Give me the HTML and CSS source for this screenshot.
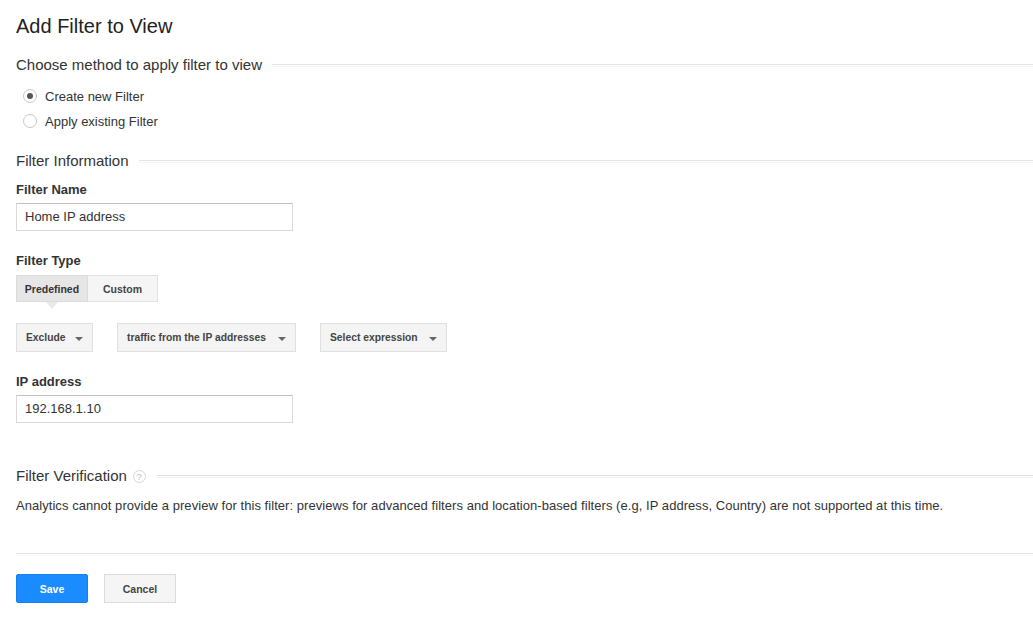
FILE: index.html
```html
<!DOCTYPE html>
<html>
<head>
<meta charset="utf-8">
<link rel="stylesheet" href="styles.css">
</head>
<body>
<div class="page">
  <h1 class="title">Add Filter to View</h1>

  <div class="section-head"><span class="section-title">Choose method to apply filter to view</span><span class="rule"></span></div>
  <div class="radios">
    <label class="radio"><span class="dot checked"></span>Create new Filter</label>
    <label class="radio"><span class="dot"></span>Apply existing Filter</label>
  </div>

  <div class="section-head info"><span class="section-title">Filter Information</span><span class="rule"></span></div>
  <div class="field-label name-label">Filter Name</div>
  <div class="input">Home IP address</div>

  <div class="field-label type-label">Filter Type</div>
  <div class="tabs">
    <span class="tab active">Predefined</span>
    <span class="tab">Custom</span>
  </div>

  <div class="selects">
    <span class="select s1">Exclude<span class="caret"></span></span>
    <span class="select s2">traffic from the IP addresses<span class="caret"></span></span>
    <span class="select s3">Select expression<span class="caret"></span></span>
  </div>

  <div class="field-label ip-label">IP address</div>
  <div class="input">192.168.1.10</div>

  <div class="section-head verif"><span class="section-title">Filter Verification</span><span class="help">?</span><span class="rule"></span></div>
  <p class="note">Analytics cannot provide a preview for this filter: previews for advanced filters and location-based filters (e.g, IP address, Country) are not supported at this time.</p>

  <div class="divider"></div>
  <div class="actions">
    <span class="btn save">Save</span>
    <span class="btn cancel">Cancel</span>
  </div>
</div>
</body>
</html>
```

FILE: styles.css
```css
html, body {
  margin: 0;
  padding: 0;
  background: #fff;
}
body {
  font-family: "Liberation Sans", Arial, sans-serif;
  color: #333;
  font-size: 13px;
}
.page {
  padding: 14px 0 0 16px;
}
.title {
  margin: 0;
  font-weight: normal;
  font-size: 20px;
  line-height: 24px;
  color: #222;
}
.section-head {
  display: flex;
  align-items: center;
  margin-top: 16px;
  height: 20px;
}
.section-title {
  font-size: 15px;
  color: #333;
  white-space: nowrap;
}
.rule {
  flex: 1;
  height: 1px;
  margin-left: 10px;
  margin-top: 3px;
  border-top: 1px solid #e2e2e2;
  border-bottom: 1px solid #f4f4f4;
}
.radios {
  margin-top: 14px;
  display: flex;
  flex-direction: column;
  gap: 9px;
}
.radio {
  display: flex;
  align-items: center;
  height: 16px;
  padding-left: 7px;
  color: #333;
}
.dot {
  width: 14px;
  height: 14px;
  border: 1px solid #c8c8c8;
  border-radius: 50%;
  margin-right: 8px;
  box-sizing: border-box;
  display: inline-flex;
  align-items: center;
  justify-content: center;
  background: #fff;
}
.dot.checked::after {
  content: "";
  width: 6px;
  height: 6px;
  border-radius: 50%;
  background: #555;
}
.section-head.info {
  margin-top: 21px;
}
.field-label {
  font-weight: bold;
  font-size: 13px;
  color: #333;
  line-height: 16px;
}
.name-label {
  margin-top: 12px;
}
.input {
  margin-top: 5px;
  width: 277px;
  height: 28px;
  box-sizing: border-box;
  border: 1px solid #d9d9d9;
  border-top-color: #c0c0c0;
  padding-left: 8px;
  line-height: 26px;
  font-size: 13px;
  color: #333;
}
.type-label {
  margin-top: 22px;
}
.tabs {
  margin-top: 6px;
  display: flex;
  width: 142px;
  height: 27px;
}
.tab {
  display: flex;
  align-items: center;
  justify-content: center;
  font-weight: bold;
  font-size: 10.5px;
  color: #444;
  background: #f5f5f5;
  border: 1px solid #e2e2e2;
  box-sizing: border-box;
  width: 70px;
}
.tab.active {
  width: 72px;
  background: #e6e6e6;
  border-color: #dcdcdc;
  color: #333;
  position: relative;
}
.tab.active::after {
  content: "";
  position: absolute;
  left: 29px;
  bottom: -8px;
  border-left: 6px solid transparent;
  border-right: 6px solid transparent;
  border-top: 7px solid #e9e9e9;
}
.tab + .tab {
  border-left: none;
}
.selects {
  margin-top: 21px;
  display: flex;
  gap: 24px;
}
.select {
  display: flex;
  align-items: center;
  height: 29px;
  box-sizing: border-box;
  border: 1px solid #e0e0e0;
  background: #f4f4f4;
  font-weight: bold;
  font-size: 10.3px;
  color: #444;
  padding-left: 9px;
  position: relative;
}
.s1 { width: 77px; }
.s2 { width: 179px; }
.s3 { width: 127px; }
.caret {
  position: absolute;
  right: 9px;
  top: 13px;
  border-left: 4px solid transparent;
  border-right: 4px solid transparent;
  border-top: 4px solid #666;
}
.ip-label {
  margin-top: 22px;
}
.section-head.verif {
  margin-top: 42px;
}
.help {
  width: 13px;
  height: 13px;
  border: 1px solid #d6d6d6;
  border-radius: 50%;
  box-sizing: border-box;
  font-size: 9px;
  color: #bbb;
  display: inline-flex;
  align-items: center;
  justify-content: center;
  margin-left: 6px;
  margin-top: 3px;
}
.verif .rule {
  margin-left: 11px;
}
.note {
  margin: 13px 0 0;
  font-size: 13px;
  line-height: 16px;
  color: #333;
  letter-spacing: 0.05px;
}
.divider {
  margin-top: 39px;
  height: 1px;
  border-top: 1px solid #e2e2e2;
  border-bottom: 1px solid #f6f6f6;
}
.actions {
  margin-top: 18px;
  display: flex;
  gap: 16px;
}
.btn {
  display: inline-flex;
  align-items: center;
  justify-content: center;
  height: 29px;
  box-sizing: border-box;
  font-weight: bold;
  font-size: 10.5px;
}
.save {
  width: 72px;
  background: #1a8cff;
  border: 1px solid #1681ec;
  color: #fff;
  border-radius: 2px;
}
.cancel {
  width: 72px;
  background: #f5f5f5;
  border: 1px solid #dcdcdc;
  color: #444;
}
```
